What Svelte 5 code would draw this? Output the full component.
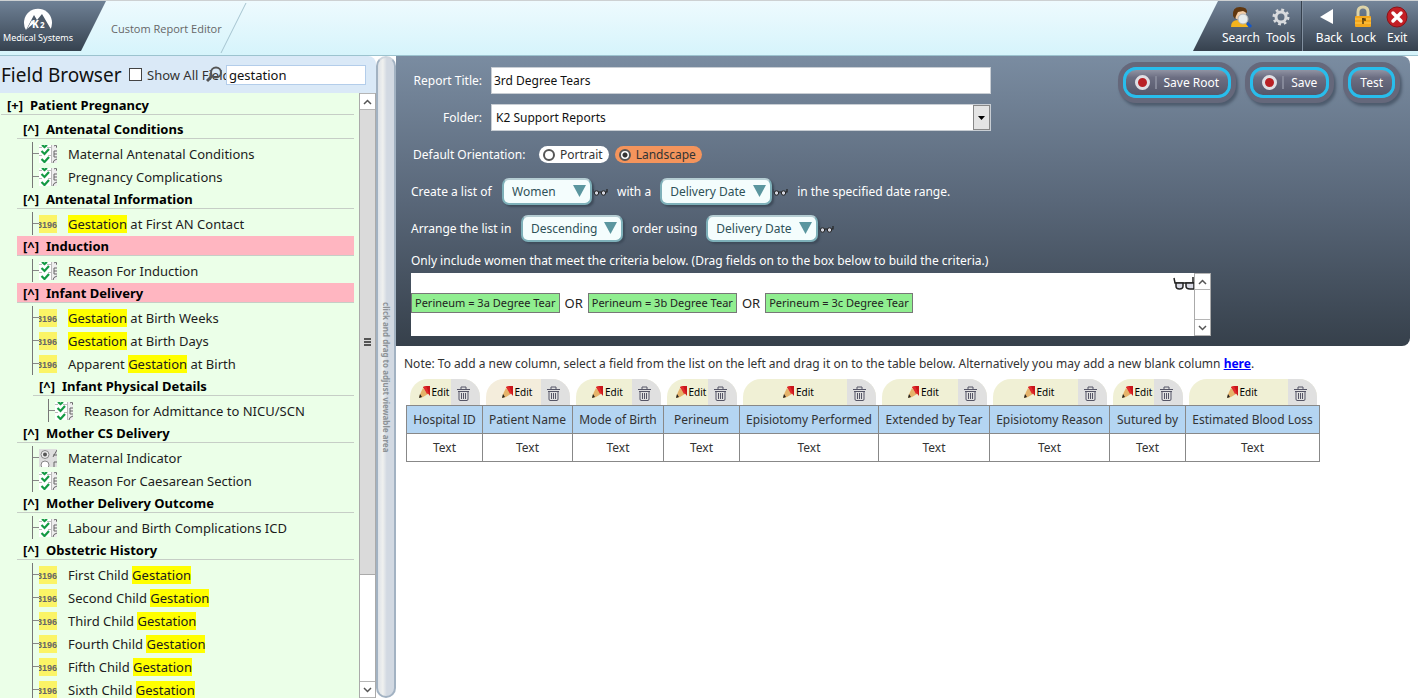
<script lang="ts">
	type Kind = 'check' | 'number' | 'radio';
	type Row = { level: number; text: string; kind?: Kind; open?: boolean; match?: boolean };

	const rows: Row[] = [
		{ level: 0, text: 'Patient Pregnancy', open: false },
		{ level: 1, text: 'Antenatal Conditions' },
		{ level: 1, text: 'Maternal Antenatal Conditions', kind: 'check' },
		{ level: 1, text: 'Pregnancy Complications', kind: 'check' },
		{ level: 1, text: 'Antenatal Information' },
		{ level: 1, text: 'Gestation at First AN Contact', kind: 'number' },
		{ level: 1, text: 'Induction', match: true },
		{ level: 1, text: 'Reason For Induction', kind: 'check' },
		{ level: 1, text: 'Infant Delivery', match: true },
		{ level: 1, text: 'Gestation at Birth Weeks', kind: 'number' },
		{ level: 1, text: 'Gestation at Birth Days', kind: 'number' },
		{ level: 1, text: 'Apparent Gestation at Birth', kind: 'number' },
		{ level: 2, text: 'Infant Physical Details' },
		{ level: 2, text: 'Reason for Admittance to NICU/SCN', kind: 'check' },
		{ level: 1, text: 'Mother CS Delivery' },
		{ level: 1, text: 'Maternal Indicator', kind: 'radio' },
		{ level: 1, text: 'Reason For Caesarean Section', kind: 'check' },
		{ level: 1, text: 'Mother Delivery Outcome' },
		{ level: 1, text: 'Labour and Birth Complications ICD', kind: 'check' },
		{ level: 1, text: 'Obstetric History' },
		{ level: 1, text: 'First Child Gestation', kind: 'number' },
		{ level: 1, text: 'Second Child Gestation', kind: 'number' },
		{ level: 1, text: 'Third Child Gestation', kind: 'number' },
		{ level: 1, text: 'Fourth Child Gestation', kind: 'number' },
		{ level: 1, text: 'Fifth Child Gestation', kind: 'number' },
		{ level: 1, text: 'Sixth Child Gestation', kind: 'number' }
	];

	const columns = [
		{ title: 'Hospital ID', width: 76 },
		{ title: 'Patient Name', width: 90 },
		{ title: 'Mode of Birth', width: 91 },
		{ title: 'Perineum', width: 76 },
		{ title: 'Episiotomy Performed', width: 139 },
		{ title: 'Extended by Tear', width: 111 },
		{ title: 'Episiotomy Reason', width: 120 },
		{ title: 'Sutured by', width: 76 },
		{ title: 'Estimated Blood Loss', width: 134 }
	];

	const criteria = ['Perineum = 3a Degree Tear', 'Perineum = 3b Degree Tear', 'Perineum = 3c Degree Tear'];

	let query = $state('gestation');
	let title = $state('3rd Degree Tears');
	let orientation = $state('landscape');

	function parts(text: string) {
		return text.split(/(Gestation)/).filter((p) => p !== '');
	}
</script>

{#snippet glasses()}
	<svg class="glasses" width="16" height="10" viewBox="0 0 16 10" aria-hidden="true">
		<path d="M1 2v3h14V2" fill="none" stroke="#222" stroke-width="1.200" />
		<circle cx="4.500" cy="6" r="2.200" fill="#d4d6e0" stroke="#222" />
		<circle cx="11.500" cy="6" r="2.200" fill="#d4d6e0" stroke="#222" />
	</svg>
{/snippet}

{#snippet picker(id: string, value: string, size: string)}
	<span class="picker {size}">
		<select {id} aria-label={id}><option>{value}</option></select>
		<svg width="13" height="12" viewBox="0 0 13 12" aria-hidden="true"><path d="M0 0h13L6.500 12z" fill="#5a969f" /></svg>
	</span>
{/snippet}

{#snippet chevron(down: boolean)}
	<svg width="9" height="6" viewBox="0 0 9 6" aria-hidden="true">
		<path d={down ? 'M1 1l3.500 3.500L8 1' : 'M1 5l3.500-3.500L8 5'} fill="none" stroke="#555" stroke-width="1.500" />
	</svg>
{/snippet}

<div class="app">
	<header>
		<div class="brand">
			<svg width="30" height="24" viewBox="0 0 30 24" aria-hidden="true">
				<path d="M3 22A14 14 0 1 1 27 22z" fill="#fff" />
				<path d="M3 22L11 7l3 5 5-6 10 17H3z" fill="#4d5a69" />
				<path d="M4 21l5-9 2 3z" fill="#fff" />
				<text x="9" y="20" font-size="10" font-weight="800" fill="#fff">K</text>
				<text x="17" y="20" font-size="8" font-weight="700" fill="#fff">2</text>
			</svg>
			<span>Medical Systems</span>
		</div>
		<div class="crumb">Custom Report Editor</div>
		<svg width="28" height="52" viewBox="0 0 28 52" aria-hidden="true"><path d="M26 2L1 52" stroke="#a5c3cf" /></svg>
		<nav>
			<button>
				<svg width="24" height="24" viewBox="0 0 24 24" aria-hidden="true">
					<path d="M2 22q0-7 7-7h5q4 0 5 7z" fill="#f5b41c" />
					<circle cx="11" cy="9" r="6" fill="#f3cda6" />
					<path d="M4 11Q3 2 11 2t7 6l-4-2-5 1-2 4-1 3z" fill="#60370f" />
					<circle cx="14" cy="14" r="5" fill="#e6ebec" stroke="#b5b5b5" />
					<path d="M18 18l4 4" stroke="#1557c8" stroke-width="3" />
				</svg>
				Search
			</button>
			<button>
				<svg width="24" height="24" viewBox="0 0 24 24" aria-hidden="true">
					<circle cx="12" cy="12" r="7" fill="none" stroke="#d8dadd" stroke-width="3" stroke-dasharray="2.700 2.800" />
					<circle cx="12" cy="12" r="5" fill="none" stroke="#d8dadd" stroke-width="3" />
				</svg>
				Tools
			</button>
			<i class="divider"></i>
			<button>
				<svg width="24" height="24" viewBox="0 0 24 24" aria-hidden="true"><path d="M16 4v15L3 12z" fill="#fff" /></svg>
				Back
			</button>
			<button>
				<svg width="24" height="24" viewBox="0 0 24 24" aria-hidden="true">
					<path d="M7 12V7q0-5 5-5t5 5v5" fill="none" stroke="#ddd3a8" stroke-width="3" />
					<rect x="4" y="11" width="16" height="11" rx="1" fill="#f4a71d" />
					<path d="M4 14h16M4 18h16" stroke="#ffcc52" />
					<path d="M12 13v6M11 14h3v2" stroke="#5b3c09" stroke-width="1.500" fill="none" />
				</svg>
				Lock
			</button>
			<button>
				<svg width="24" height="24" viewBox="0 0 24 24" aria-hidden="true">
					<circle cx="12" cy="12" r="10" fill="#c31f25" stroke="#8c1116" />
					<path d="M8 8l8 8M16 8l-8 8" stroke="#fff" stroke-width="3.500" stroke-linecap="round" />
				</svg>
				Exit
			</button>
		</nav>
	</header>

	<div class="body">
		<aside>
			<div class="browser-head">
				<h1>Field Browser</h1>
				<label class="show-all"><input type="checkbox" />Show All Fields</label>
				<div class="search">
					<svg width="17" height="17" viewBox="0 0 17 17" aria-hidden="true">
						<circle cx="10" cy="6.500" r="5" fill="none" stroke="#555" stroke-width="2" />
						<path d="M6 10l-5 5" stroke="#555" stroke-width="3" />
					</svg>
					<input type="text" aria-label="Search fields" bind:value={query} />
				</div>
			</div>

			<div class="browser-body">
				<div class="tree">
					{#each rows as row}
						{#if row.kind}
							<div class="field l{row.level}">
								{#if row.kind === 'check'}
									<svg width="18" height="18" viewBox="0 0 18 18" aria-hidden="true">
										<path d="M0 0h12v18H0z" fill="#fff" />
										<path d="M12 0h6v18h-6z" fill="#eee" />
										<path d="M0 2.500h3M0 10.500h3M8 2.500h4M9 10.500h3M12.500 0v18" stroke="#bbb" />
										<path d="M3 0l2.500 2L8 0M2.500 6l3 3L10 4M2.500 14l3 3L10 12" fill="none" stroke="#149a44" stroke-width="2.200" />
										<path d="M15 1l2-1 1 3M18 6h-3v6h3M15 9h3M14 18q0-3 4-4" fill="none" stroke="#666" />
									</svg>
								{:else if row.kind === 'number'}
									<svg width="18" height="18" viewBox="0 0 18 18" aria-hidden="true">
										<path d="M0 0h18v18H0z" fill="#fbf466" />
										<text class="digits" x="-2" y="13">3196</text>
									</svg>
								{:else}
									<svg width="18" height="18" viewBox="0 0 18 18" aria-hidden="true">
										<path d="M0 0h18v18H0z" fill="#dedede" />
										<circle cx="6" cy="5.500" r="4" fill="#eee" stroke="#888" />
										<circle cx="6" cy="5.500" r="2" fill="#555" />
										<circle cx="6" cy="16" r="4" fill="#fff" stroke="#888" />
										<path d="M14 8l4-7M14 6h4M15 18v-5h3" fill="none" stroke="#666" />
									</svg>
								{/if}
								<span>{#each parts(row.text) as part}{#if part === 'Gestation'}<mark>{part}</mark>{:else}{part}{/if}{/each}</span>
							</div>
						{:else}
							<div class="group l{row.level}" class:match={row.match}>
								<span>{row.open === false ? '[+]' : '[^]'}</span>{row.text}
							</div>
						{/if}
					{/each}
				</div>
				<div class="scrollbar">
					<button aria-label="Scroll up">{@render chevron(false)}</button>
					<div class="thumb"><i></i><i></i><i></i></div>
					<div class="track"></div>
					<button aria-label="Scroll down">{@render chevron(true)}</button>
				</div>
			</div>
		</aside>

		<div class="splitter"><span>click and drag to adjust viewable area</span></div>

		<main>
			<section class="panel">
				<div class="line top">
					<div class="names">
						<label for="title">Report Title:</label>
						<input id="title" type="text" bind:value={title} />
						<label for="folder">Folder:</label>
						<div class="folder">
							<select id="folder"><option>K2 Support Reports</option></select>
							<span class="drop"><svg width="7" height="4" viewBox="0 0 7 4" aria-hidden="true"><path d="M0 0h7L3.500 4z" fill="#000" /></svg></span>
						</div>
					</div>
					<div class="actions">
						<button><i class="dot"></i><i class="bar"></i>Save Root</button>
						<button><i class="dot"></i><i class="bar"></i>Save</button>
						<button>Test</button>
					</div>
				</div>

				<div class="line orient">
					<span class="lead">Default Orientation:</span>
					<label class="radio" class:on={orientation === 'portrait'}>
						<input type="radio" value="portrait" bind:group={orientation} />Portrait
					</label>
					<label class="radio" class:on={orientation === 'landscape'}>
						<input type="radio" value="landscape" bind:group={orientation} />Landscape
					</label>
				</div>

				<div class="line">
					<span class="create">Create a list of</span>
					{@render picker('subject', 'Women', 'small')}{@render glasses()}
					<span class="mid">with a</span>
					{@render picker('date-field', 'Delivery Date', 'large')}{@render glasses()}
					<span class="mid">in the specified date range.</span>
				</div>

				<div class="line">
					<span class="arrange">Arrange the list in</span>
					{@render picker('direction', 'Descending', 'medium')}
					<span class="mid">order using</span>
					{@render picker('order-field', 'Delivery Date', 'large')}{@render glasses()}
				</div>

				<p class="hint">Only include women that meet the criteria below. (Drag fields on to the box below to build the criteria.)</p>

				<div class="criteria">
					<div class="clauses">
						{#each criteria as c, i}
							{#if i > 0}<span>OR</span>{/if}
							<span class="clause">{c}</span>
						{/each}
					</div>
					<svg class="big-glasses" width="21" height="14" viewBox="0 0 21 14" aria-hidden="true">
						<path d="M1 1l1 5h19M20 0v6" fill="none" stroke="#222" stroke-width="1.500" />
						<path d="M3 6h7v3q0 3-3.500 3T3 9zM13 6h8v6h-4q-4 0-4-3z" fill="#d9dae6" stroke="#222" stroke-width="1.500" />
					</svg>
					<div class="scrollbar">
						<button aria-label="Scroll up">{@render chevron(false)}</button>
						<div class="track"></div>
						<button aria-label="Scroll down">{@render chevron(true)}</button>
					</div>
				</div>
			</section>

			<p class="note">
				Note: To add a new column, select a field from the list on the left and drag it on to the table below. Alternatively you may add a new blank column <a href="#new">here</a>.
			</p>

			<table>
				<colgroup>
					{#each columns as col}<col style="width: {col.width}px" />{/each}
				</colgroup>
				<thead>
					<tr>
						{#each columns as col, i}
							<td class="tools">
								<div class="tab" class:warm={i === 1}>
									<button class="edit">
										<svg width="11" height="12" viewBox="0 0 11 12" aria-hidden="true">
											<path d="M4 1l3-1h4v10z" fill="#c9151b" />
											<path d="M4 2l5 6-5 3-3 1-1-1 2-5z" fill="#e5b36a" />
											<path d="M4 1l3-1 3 7-2 1z" fill="#e02a2a" />
											<path d="M1 8l2 3-3 1z" fill="#222" />
										</svg>Edit
									</button>
									<button class="trash" aria-label="Delete {col.title}">
										<svg width="13" height="15" viewBox="0 0 13 15" aria-hidden="true">
											<path d="M4 3V1h5v2M0 3.500h13M1 5.500h11M2 6v7q0 1.500 1 1.500h7q1 0 1-1.500V6M4.500 7v6M6.500 7v6M8.500 7v6" fill="none" stroke="#555566" />
										</svg>
									</button>
								</div>
							</td>
						{/each}
					</tr>
					<tr>
						{#each columns as col}<th>{col.title}</th>{/each}
					</tr>
				</thead>
				<tbody>
					<tr>
						{#each columns as _}<td>Text</td>{/each}
					</tr>
				</tbody>
			</table>
		</main>
	</div>
</div>

<style>
	:global(body) { background: #fff; }
	.app { height: 100vh; display: flex; flex-direction: column; overflow: hidden; font-family: "Noto Sans", "Open Sans", sans-serif; font-size: 12px; line-height: 16px; color: #333; }
	.app * { box-sizing: border-box; }
	button, input, select { font: inherit; color: inherit; margin: 0; }
	button { border: 0; padding: 0; background: none; cursor: pointer; }
	svg { flex: none; }

	header { flex: none; display: flex; height: 56px; border-top: 1px solid #cdd0d2; border-bottom: 1px solid #9cc3cf; background: linear-gradient(#eefafe, #d6f4fb); }
	.brand { width: 106px; height: 50px; padding: 7px 30px 0 0; display: flex; flex-direction: column; align-items: center; color: #fff; font-size: 9px; line-height: 12px; white-space: nowrap; background: linear-gradient(#6f8196, #36424f); clip-path: polygon(0 0, 100% 0, 81px 100%, 0 100%); }
	.crumb { width: 114px; padding: 20px 0 0 5px; font-family: "Open Sans", "Noto Sans", sans-serif; font-size: 11px; color: #666; white-space: nowrap; }
	nav { margin-left: auto; width: 225px; height: 50px; padding: 4px 0 0 29px; display: flex; gap: 6px; color: #fff; background: linear-gradient(#74859a, #36414e); clip-path: polygon(25px 0, 100% 0, 100% 100%, 0 100%); }
	nav button { flex: none; min-width: 28px; display: flex; flex-direction: column; align-items: center; }
	nav svg { margin-bottom: 1px; }
	.divider { width: 2px; margin: -4px 6px 0 0; background: #35404d; border-right: 1px solid #8290a0; }

	.body { flex: 1; min-height: 0; display: flex; }
	aside { width: 376px; flex: none; display: flex; flex-direction: column; }
	.browser-head { height: 37px; flex: none; display: flex; align-items: center; padding-right: 10px; background: #dae9f7; border-top-right-radius: 8px; }
	h1 { margin: 0 10px 0 1px; width: 118px; font-size: 19px; font-weight: 400; line-height: 26px; color: #111; white-space: nowrap; }
	.show-all { flex: 1; min-width: 0; display: flex; align-items: center; gap: 5px; overflow: hidden; white-space: nowrap; font-size: 13px; }
	.show-all input { flex: none; appearance: none; width: 13px; height: 13px; border: 1px solid #444; background: #fff; }
	.search { position: relative; width: 140px; flex: none; }
	.search svg { position: absolute; left: -20px; top: 1px; }
	.search input { display: block; width: 100%; height: 20px; padding: 0 2px; border: 1px solid #b3cdea; font-size: 13px; color: #111; background: #fff; }
	.browser-body { flex: 1; min-height: 0; display: flex; background: #ebffe8; }
	.tree { flex: 1; min-width: 0; display: flex; flex-direction: column; overflow: hidden; padding: 1px 5px 0 1px; font-size: 13px; color: #1c1c1c; white-space: nowrap; }
	.group { flex: none; height: 20px; margin: 1px 0 3px; padding-left: 6px; line-height: 20px; font-weight: 700; color: #000; border-bottom: 1px solid #c6cec6; }
	.group span { display: inline-block; width: 23px; }
	.group.match { background: #ffb6c1; }
	.group.l1 { margin-left: 16px; }
	.group.l2 { margin-left: 32px; }
	.field { flex: none; display: flex; align-items: center; height: 23px; margin-left: 31px; }
	.field.l2 { margin-left: 47px; }
	.field::before { content: ''; width: 6px; height: 23px; border-left: 1px solid #777; background: linear-gradient(#888, #888) 0 11px / 6px 1px no-repeat; }
	.field span { margin-left: 11px; }
	.field svg { overflow: hidden; }
	.digits { font: 700 9px "Liberation Sans", sans-serif; fill: #666; }
	mark { display: inline-block; line-height: 18px; background: #ff0; color: inherit; }

	.scrollbar { width: 17px; flex: none; display: flex; flex-direction: column; border-left: 1px solid #aaa; border-right: 1px solid #aaa; background: #fff; }
	.scrollbar button { height: 17px; flex: none; display: flex; align-items: center; justify-content: center; border: 1px solid #b5b5b5; border-width: 1px 0; }
	.scrollbar .track { flex: 5; }
	.scrollbar .thumb { flex: 22; display: flex; flex-direction: column; align-items: center; justify-content: center; gap: 1px; background: #dadada; border-bottom: 1px solid #aaa; }
	.thumb i { width: 7px; height: 2px; background: #555; }

	.splitter { width: 20px; flex: none; display: flex; align-items: center; justify-content: center; border: 2px solid #a2b2c2; border-top-color: #cfd6de; border-radius: 10px; background: linear-gradient(90deg, #dde2e8, #f0f1ef 30%, #d2d9e2 55%, #d2d9e2); cursor: col-resize; }
	.splitter span { writing-mode: vertical-rl; font: 700 8px/12px "Noto Sans", sans-serif; color: #8c9296; white-space: nowrap; }

	main { flex: 1; min-width: 0; }
	.panel { margin-right: 8px; padding: 11px 0 10px 15px; border-radius: 0 8px 8px 0; background: linear-gradient(#7a8ca1, #596779 50%, #36404b); color: #fff; }
	.line { display: flex; align-items: center; height: 37px; white-space: nowrap; }
	.top { height: auto; align-items: flex-start; justify-content: space-between; padding-right: 10px; }
	.names { display: grid; grid-template-columns: 71px 500px; gap: 10px 9px; align-items: center; }
	.names label { text-align: right; }
	.names input, .folder { height: 27px; border: 1px solid #c9ced4; background: #fff; color: #111; }
	.names input { padding: 0 2px; }
	.folder { display: flex; }
	.folder select { flex: 1; appearance: none; border: 0; padding: 0 4px; background: none; }
	.drop { width: 17px; display: flex; align-items: center; justify-content: center; border: 1px solid #888; background: #e4e4e4; }
	.actions { display: flex; gap: 19px; padding-right: 5px; }
	.actions button { display: flex; align-items: center; height: 31px; padding: 0 9px; border: 3px solid #28bdec; border-radius: 13px; background: linear-gradient(#9093a3, #6c6e82 30%, #55576a); box-shadow: 0 0 0 5px #65687b, 2px 3px 3px 5px #4d5b6d; }
	.dot { width: 15px; height: 15px; border: 3px solid #dfdfe4; border-radius: 50%; background: #b92025; }
	.bar { width: 2px; height: 13px; margin: 0 7px 0 5px; background: #858899; }
	.orient { margin-top: 5px; gap: 6px; }
	.lead { width: 122px; padding-left: 2px; }
	.radio { display: flex; align-items: center; gap: 5px; height: 17px; padding: 0 6px 0 4px; border-radius: 9px; background: #fff; color: #333; }
	.radio.on { background: #f4945c; }
	.radio input { appearance: none; width: 12px; height: 12px; border: 2px solid #555; border-radius: 50%; background: #fff; }
	.radio.on input { background: radial-gradient(#333 0 2px, #fff 3px); }
	.create { width: 91px; }
	.arrange { width: 110px; }
	.mid { padding: 0 9px; }
	.picker { position: relative; display: flex; height: 27px; }
	.picker select { width: 100%; appearance: none; padding: 0 8px; border: 2px solid #7eb0b9; border-top-color: #b5cdd3; border-radius: 7px; background: #f4fdfd; color: #2f5158; box-shadow: 2px 2px 2px #3f4c5b; }
	.picker svg { position: absolute; right: 6px; top: 7px; pointer-events: none; }
	.picker.small { width: 90px; }
	.picker.medium { width: 102px; }
	.picker.large { width: 112px; }
	.hint { margin: 6px 0 4px; }
	.criteria { display: flex; width: 800px; height: 63px; background: #fff; color: #222; white-space: nowrap; }
	.clauses { flex: 1; display: flex; align-items: center; gap: 5px; padding-bottom: 4px; font-size: 13px; }
	.clause { height: 20px; padding: 1px 3px; border: 1px solid #777; background: #90ee90; font-size: 11px; line-height: 16px; }
	.big-glasses { margin-top: 4px; }

	.note { margin: 10px 8px 7px; }
	.note a { font-weight: 700; color: #00f; }
	table { table-layout: fixed; width: 914px; margin-left: 10px; border-collapse: collapse; text-align: center; white-space: nowrap; }
	th, td { height: 28px; padding: 1px 0 0; border: 1px solid #888; font-weight: 400; }
	th { background: #b4d5f2; }
	td.tools { height: 26px; padding: 0 3px; border: 0 solid; }
	.tab { display: flex; height: 26px; overflow: hidden; border-radius: 18px 18px 0 0; background: #f0f0d5; }
	.tab.warm { background: #f4eddc; }
	.edit { flex: 1; display: flex; align-items: center; justify-content: center; gap: 2px; padding-left: 8px; font-size: 10px; line-height: 14px; color: #000; }
	.trash { width: 29px; flex: none; display: flex; align-items: center; padding: 3px 0 0 6px; background: #e0e0e0; }
</style>
